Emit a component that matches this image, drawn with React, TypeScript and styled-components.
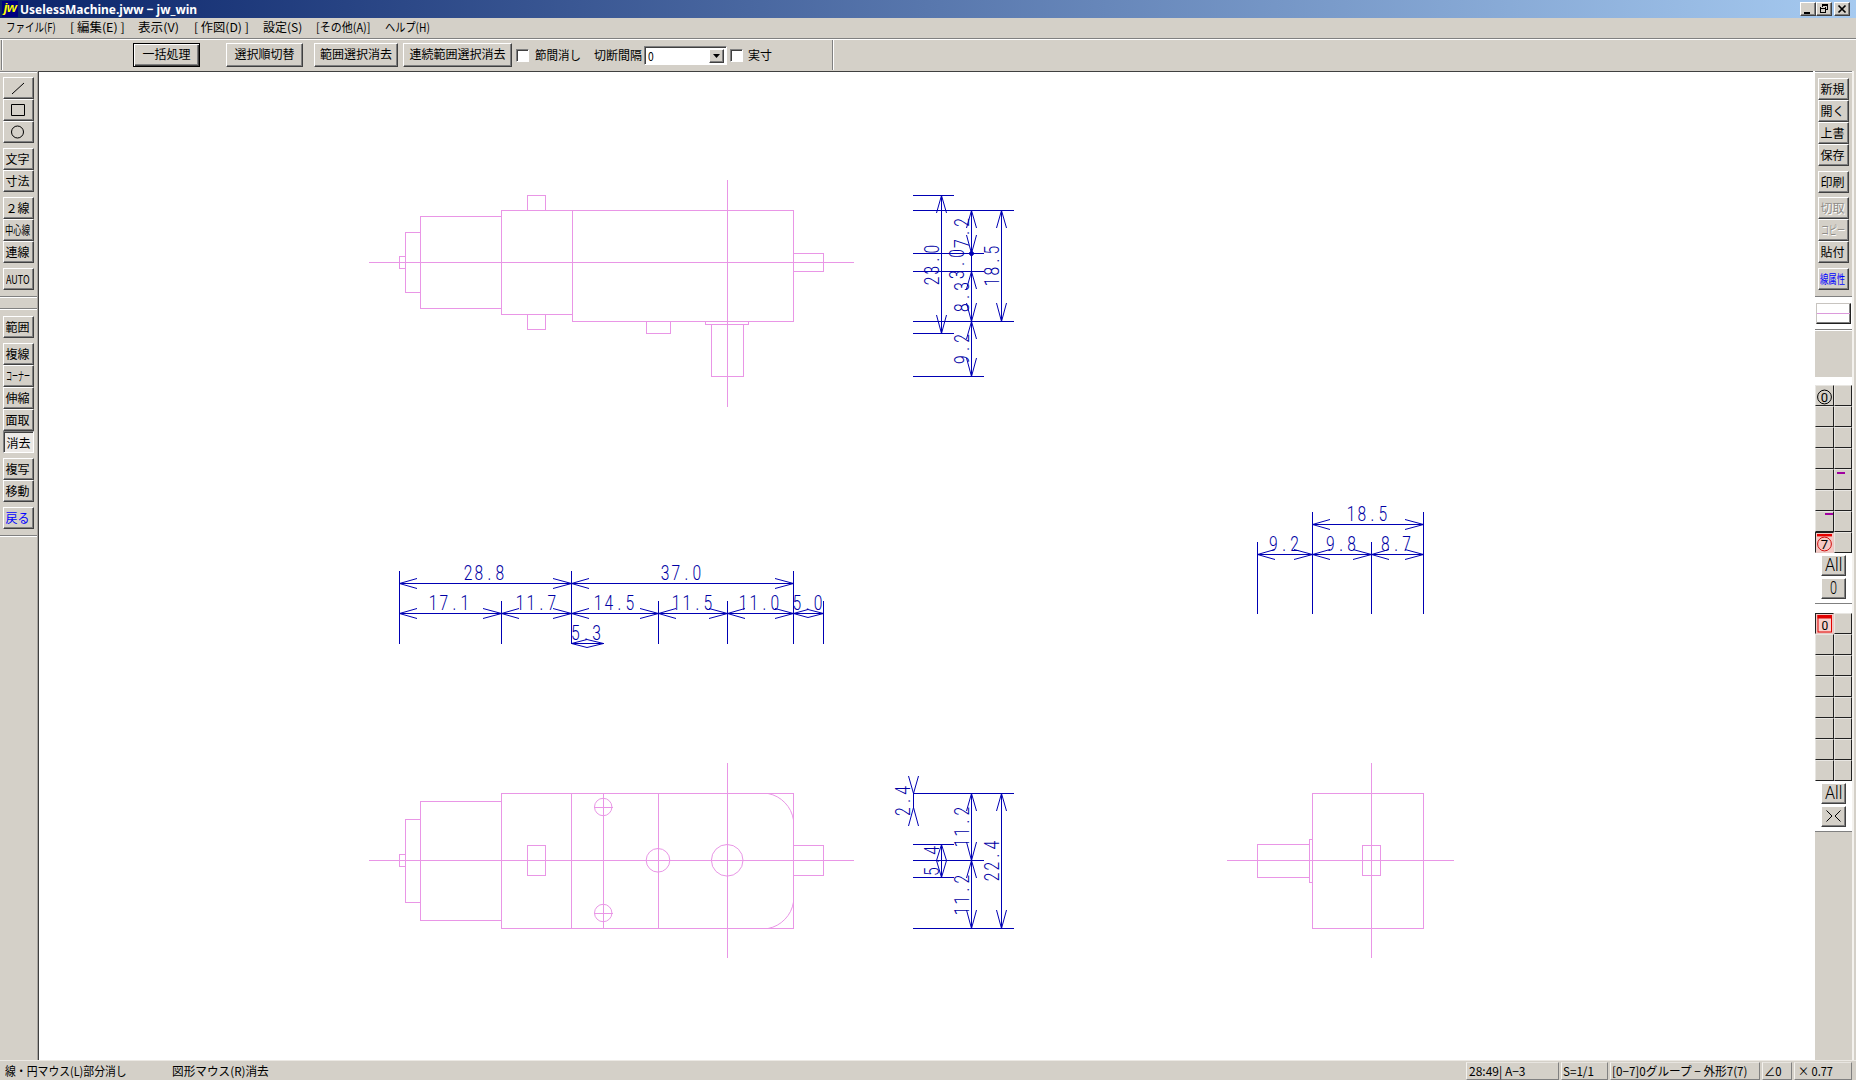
import React, { useLayoutEffect, useRef, useState } from "react";
import styled, { createGlobalStyle, css } from "styled-components";

const FACE = "#d4d0c8";
const DARK = "#808080";
const INK = "#0000b4";
const PINK = "#e996e6";
const UI_FONT = '"Noto Sans CJK JP", "Liberation Sans", sans-serif';

const GlobalStyle = createGlobalStyle`
  * { box-sizing: border-box; }
  body { margin: 0; background: ${FACE}; overflow: hidden; }
`;

const raised = css`
  border: 1px solid;
  border-color: #fff #404040 #404040 #fff;
  box-shadow: inset -1px -1px 0 ${DARK};
`;

const sunken = css`
  border: 1px solid;
  border-color: ${DARK} #fff #fff ${DARK};
  box-shadow: inset 1px 1px 0 #404040;
`;

const Window = styled.div`
  width: 1856px;
  height: 1080px;
  display: flex;
  flex-direction: column;
  background: ${FACE};
  color: #000;
  font: 12px/14px ${UI_FONT};
  overflow: hidden;
`;

/* ---------- text squeezed to the narrow UI face ---------- */

const FitBox = styled.span<{ $w: number; $gap: number }>`
  display: block;
  flex: none;
  width: ${(p) => p.$w}px;
  margin-left: ${(p) => p.$gap}px;
  white-space: pre;
`;

const FitInner = styled.span`
  display: inline-block;
  transform-origin: 0 50%;
`;

function Fit({ w, gap = 0, children }: { w: number; gap?: number; children: React.ReactNode }) {
  const ref = useRef<HTMLSpanElement>(null);
  const [scale, setScale] = useState(1);
  useLayoutEffect(() => {
    if (ref.current) setScale(w / ref.current.offsetWidth);
  }, [w]);
  return (
    <FitBox $w={w} $gap={gap}>
      <FitInner ref={ref} style={{ transform: `scaleX(${scale})` }}>
        {children}
      </FitInner>
    </FitBox>
  );
}

/* ---------- title bar ---------- */

const TitleBar = styled.header`
  flex: none;
  height: 18px;
  display: flex;
  align-items: center;
  background: linear-gradient(90deg, #0a246a, #a6caf0);
  color: #fff;
  font: bold 13px/18px "Noto Sans", "Liberation Sans", sans-serif;
`;

const AppIcon = styled.span`
  width: 16px;
  height: 16px;
  margin-left: 2px;
  background: #000080;
  color: #ffff00;
  font: italic bold 13px/14px "Liberation Sans", sans-serif;
  text-align: center;
  letter-spacing: -0.5px;
`;

const WindowButtons = styled.div`
  display: flex;
  margin-left: auto;
  padding-right: 6px;
`;

const WindowButton = styled.button<{ $gap?: number }>`
  width: 16px;
  height: 14px;
  margin-left: ${(p) => p.$gap ?? 0}px;
  padding: 0;
  background: ${FACE};
  display: flex;
  ${raised}
`;

/* ---------- menu ---------- */

const MenuBar = styled.nav`
  flex: none;
  height: 20px;
  display: flex;
  align-items: center;
  padding-bottom: 2px;
  line-height: 18px;
`;

/* ---------- toolbar ---------- */

const ToolBar = styled.div`
  flex: none;
  height: 33px;
  display: flex;
  align-items: center;
  border-top: 1px solid ${DARK};
  box-shadow: inset 0 1px 0 #fff;
`;

const Groove = styled.i<{ $gap: number }>`
  flex: none;
  width: 2px;
  height: 30px;
  margin-left: ${(p) => p.$gap}px;
  border-left: 1px solid ${DARK};
  border-right: 1px solid #fff;
`;

const PushButton = styled.button<{ $w: number; $gap: number; $default?: boolean }>`
  flex: none;
  width: ${(p) => p.$w}px;
  height: 24px;
  margin-left: ${(p) => p.$gap}px;
  padding: 0 0 3px;
  display: flex;
  align-items: center;
  justify-content: center;
  background: ${FACE};
  color: #000;
  font: 12px/18px ${UI_FONT};
  ${raised}
  ${(p) =>
    p.$default &&
    css`
      border-color: #000;
      box-shadow: inset 1px 1px 0 #fff, inset -1px -1px 0 #404040, inset -2px -2px 0 ${DARK};
    `}
`;

const CheckBox = styled.span<{ $gap: number }>`
  flex: none;
  width: 13px;
  height: 13px;
  margin-left: ${(p) => p.$gap}px;
  background: #fff;
  ${sunken}
`;

const Combo = styled.div`
  flex: none;
  width: 83px;
  height: 19px;
  margin-left: 2px;
  padding: 2px;
  display: flex;
  justify-content: space-between;
  line-height: 13px;
  background: #fff;
  ${sunken}
`;

const ComboButton = styled.span`
  width: 15px;
  height: 14px;
  background: ${FACE};
  display: flex;
  align-items: center;
  justify-content: center;
  ${raised}
`;

/* ---------- work area ---------- */

const Work = styled.main`
  flex: 1;
  min-height: 0;
  display: flex;
`;

const SideBar = styled.aside`
  flex: none;
  width: 37px;
  display: flex;
  flex-direction: column;
  align-items: flex-start;
  border-top: 1px solid ${DARK};
  box-shadow: inset 0 1px 0 #fff;
  padding-top: 6px;
`;

const LeftFrame = styled.div`
  flex: none;
  width: 39px;
  display: flex;
  border-right: 1px solid #404040;
`;

const Rail = styled.i`
  flex: none;
  width: 1px;
  background: #a8a4a0;
`;

const RightFrame = styled.div`
  flex: none;
  width: 43px;
  display: flex;
  padding-left: 2px;
  background: linear-gradient(90deg, #fff 2px, ${FACE} 2px);
`;

const EdgeLine = styled.i`
  flex: none;
  width: 2px;
  background: #f4f2ee;
`;

const ToolGroup = styled.div<{ $gap?: number }>`
  flex: none;
  display: flex;
  flex-direction: column;
  margin-top: ${(p) => p.$gap ?? 5}px;
  margin-left: 3px;
`;

const Tool = styled.button<{ $tone?: "blue" | "off"; $down?: boolean }>`
  width: 31px;
  height: 22px;
  padding: 0 2px 0 0;
  display: flex;
  align-items: center;
  justify-content: center;
  background: ${FACE};
  color: ${(p) => (p.$tone === "blue" ? "#0000ff" : p.$tone === "off" ? "#908d88" : "#000")};
  text-shadow: ${(p) => (p.$tone === "off" ? "1px 1px 0 #fff" : "none")};
  font: 12px/18px ${UI_FONT};
  ${raised}
  ${(p) =>
    p.$down &&
    css`
      background: #ece9e6;
      padding: 1px 0 0;
      ${sunken}
    `}
`;

const Rule = styled.i<{ $gap: number }>`
  flex: none;
  width: 100%;
  height: 2px;
  margin-top: ${(p) => p.$gap}px;
  border-top: 1px solid ${DARK};
  border-bottom: 1px solid #fff;
`;

const Canvas = styled.section`
  flex: 1;
  min-width: 0;
  background: #fff;
  border-top: 1px solid #404040;
`;

const Drawing = styled.svg`
  display: block;
  width: 1774px;
  height: 988px;
`;

/* ---------- layer panel ---------- */

const PenBand = styled.div`
  flex: none;
  width: 100%;
  height: 32px;
  padding: 5px 1px 0;
  background: #fff;
`;

const PenPreview = styled.div`
  height: 21px;
  display: flex;
  align-items: center;
  background: #fff;
  border: 1px solid;
  border-color: #c8c4c0 #202020 #202020 #c8c4c0;
  box-shadow: inset -1px -1px 0 #808080;
  i { flex: 1; height: 1px; background: #dc9adc; }
`;

const LayerPanel = styled.div<{ $top: number; $pad: number; $h: number }>`
  flex: none;
  width: 100%;
  height: ${(p) => p.$h}px;
  margin-top: ${(p) => p.$top}px;
  padding-top: ${(p) => p.$pad}px;
  display: flex;
  flex-direction: column;
  align-items: center;
  background: #fff;
  border-bottom: 1px solid ${DARK};
`;

const LayerGrid = styled.div`
  width: 37px;
  height: 168px;
  display: grid;
  grid-template: repeat(8, 21px) / 19px 18px;
  margin-bottom: 2px;
`;

const Cell = styled.div<{ $down?: boolean }>`
  background: ${FACE};
  border: 1px solid;
  border-color: #e8e6e2 #202020 #202020 #e8e6e2;
  display: flex;
  align-items: center;
  justify-content: center;
  overflow: hidden;
  ${(p) =>
    p.$down &&
    css`
      border-color: #202020 #e8c8c4 #e8c8c4 #202020;
      background: #f4c8c4;
    `}
`;

const Dash = styled.i<{ $x: number; $y: number }>`
  align-self: flex-start;
  width: 8px;
  height: 2px;
  margin: ${(p) => p.$y}px auto 0 ${(p) => p.$x}px;
  background: #a000a0;
`;

const LayerButton = styled.button`
  flex: none;
  width: 25px;
  height: 21px;
  margin-bottom: 2px;
  padding: 0 1px 1px 0;
  display: flex;
  align-items: center;
  justify-content: center;
  background: ${FACE};
  color: #000;
  font: 300 18px/18px Roboto, "Liberation Sans", sans-serif;
  ${raised}
`;

/* ---------- status bar ---------- */

const StatusBar = styled.footer`
  flex: none;
  height: 20px;
  display: flex;
  align-items: center;
  padding: 1px 4px 0 0;
  border-top: 1px solid #ece9e4;
`;

const StatusCell = styled.div<{ $w: number }>`
  flex: none;
  width: ${(p) => p.$w}px;
  height: 18px;
  margin-left: 2px;
  padding-bottom: 1px;
  display: flex;
  align-items: center;
  border: 1px solid;
  border-color: #e8e5e0 ${DARK} ${DARK} #f4f2ee;
`;

const StatusMessage = styled.div`
  display: flex;
  flex: 1;
  padding-bottom: 1px;
`;

/* ---------- drawing primitives ---------- */

const Outline = styled.g`
  fill: none;
  stroke: ${PINK};
  stroke-width: 1;
`;

const Dims = styled.g`
  fill: none;
  stroke: ${INK};
  stroke-width: 1;
`;

const DimText = styled.text`
  fill: #0000a4;
  stroke: none;
  text-anchor: middle;
  font: 300 19.5px Roboto, "Liberation Sans", sans-serif;
`;

const Box = ({ x1, y1, x2, y2 }: { x1: number; y1: number; x2: number; y2: number }) => (
  <rect x={x1 + 0.5} y={y1 + 0.5} width={x2 - x1} height={y2 - y1} shapeRendering="crispEdges" />
);

const HLine = ({ x1, x2, y }: { x1: number; x2: number; y: number }) => (
  <line x1={x1} x2={x2 + 1} y1={y + 0.5} y2={y + 0.5} shapeRendering="crispEdges" />
);

const VLine = ({ x, y1, y2 }: { x: number; y1: number; y2: number }) => (
  <line x1={x + 0.5} x2={x + 0.5} y1={y1} y2={y2 + 1} shapeRendering="crispEdges" />
);

const STEP = 10.6;
const SQUEEZE = 0.8;

function Label({ x, y, text, up }: { x: number; y: number; text: string; up?: boolean }) {
  const xs = [...text].map((_, i) => ((i - (text.length - 1) / 2) * STEP) / SQUEEZE).join(" ");
  return (
    <DimText x={xs} y={0} transform={`translate(${x} ${y}) ${up ? "rotate(-90)" : ""} scale(${SQUEEZE} 1)`}>
      {text}
    </DimText>
  );
}

function HDim({ a, b, y, text, c }: { a: number; b: number; y: number; text: string; c: number }) {
  const l = Math.min(18, (b - a) / 2);
  const m = y + 0.5;
  const s = l < 18 ? 4 : 5;
  return (
    <>
      <HLine x1={a} x2={b} y={y} />
      <path d={`M${a + l} ${m - s}L${a + 0.5} ${m}L${a + l} ${m + s}M${b - l} ${m - s}L${b + 0.5} ${m}L${b - l} ${m + s}`} />
      <Label x={c} y={y - 3.5} text={text} />
    </>
  );
}

function VDim({ a, b, x, text, c, off = 2.5, bare }: { a: number; b: number; x: number; text: string; c: number; off?: number; bare?: boolean }) {
  const l = Math.min(18, (b - a) / 2);
  const m = x + 0.5;
  return (
    <>
      <VLine x={x} y1={a} y2={b} />
      {!bare && (
        <path d={`M${m - 5} ${a + l}L${m} ${a + 0.5}L${m + 5} ${a + l}M${m - 5} ${b - l}L${m} ${b + 0.5}L${m + 5} ${b - l}`} />
      )}
      <Label x={x - off} y={c} text={text} up />
    </>
  );
}

const SideView = () => (
  <Outline>
    <HLine x1={369} x2={853} y={262} />
    <VLine x={727} y1={180} y2={406} />
    <Box x1={399} y1={256} x2={405} y2={268} />
    <Box x1={405} y1={232} x2={420} y2={292} />
    <Box x1={420} y1={216} x2={501} y2={308} />
    <Box x1={501} y1={210} x2={572} y2={314} />
    <Box x1={572} y1={210} x2={793} y2={321} />
    <Box x1={527} y1={195} x2={545} y2={210} />
    <Box x1={527} y1={314} x2={545} y2={329} />
    <Box x1={793} y1={253} x2={823} y2={271} />
    <Box x1={646} y1={321} x2={670} y2={333} />
    <Box x1={705} y1={321} x2={748} y2={324} />
    <Box x1={711} y1={324} x2={743} y2={376} />
  </Outline>
);

const TopView = () => (
  <Outline>
    <HLine x1={369} x2={853} y={860} />
    <VLine x={727} y1={763} y2={957} />
    <Box x1={399} y1={854} x2={405} y2={866} />
    <Box x1={405} y1={819} x2={420} y2={902} />
    <Box x1={420} y1={801} x2={501} y2={920} />
    <Box x1={501} y1={793} x2={793} y2={928} />
    <VLine x={571} y1={793} y2={928} />
    <VLine x={603} y1={793} y2={928} />
    <VLine x={658} y1={793} y2={928} />
    <Box x1={527} y1={845} x2={545} y2={875} />
    <Box x1={793} y1={845} x2={823} y2={875} />
    <circle cx={603.2} cy={807} r={8.7} />
    <circle cx={603.2} cy={913} r={8.7} />
    <HLine x1={594} x2={612} y={807} />
    <HLine x1={594} x2={612} y={913} />
    <circle cx={658} cy={860.3} r={11.8} />
    <circle cx={727.2} cy={860.3} r={15.8} />
    <path d="M768 793.5A32 32 0 0 1 793.5 820M768 928.5A32 32 0 0 0 793.5 902" />
  </Outline>
);

const EndView = () => (
  <Outline>
    <HLine x1={1227} x2={1453} y={860} />
    <VLine x={1371} y1={763} y2={957} />
    <Box x1={1312} y1={793} x2={1423} y2={928} />
    <Box x1={1362} y1={845} x2={1380} y2={875} />
    <Box x1={1309} y1={839} x2={1312} y2={882} />
    <Box x1={1257} y1={844} x2={1309} y2={877} />
  </Outline>
);

const Dimensions = () => (
  <Dims>
    {[[195, 953], [210, 1013], [253, 983], [271, 983], [321, 1013], [333, 953], [376, 983],
      [793, 1013], [844, 953], [860, 983], [877, 953], [928, 1013]].map(([y, x2]) => (
      <HLine key={y} x1={913} x2={x2} y={y} />
    ))}
    <VDim x={941} a={195} b={333} text="23.0" c={265} />
    <VDim x={971} a={210} b={253} text="7.2" c={233} />
    <VDim x={971} a={253} b={271} text="3.0" c={264} off={7} bare />
    <VDim x={971} a={271} b={321} text="8.3" c={297} />
    <VDim x={971} a={321} b={376} text="9.2" c={349} />
    <VDim x={1001} a={210} b={321} text="18.5" c={266} />
    <circle cx={971.5} cy={253.5} r={2} fill={INK} />

    <VLine x={913} y1={793} y2={807} />
    <path d="M908.500 776L913.500 793.500L918.500 776M908.500 826L913.500 807.500L918.500 826" />
    <Label x={909.5} y={801} text="2.4" up />
    <VDim x={971} a={793} b={860} text="11.2" c={827} />
    <VDim x={971} a={860} b={928} text="11.2" c={895} />
    <VDim x={1001} a={793} b={928} text="22.4" c={861} />
    <VDim x={941} a={844} b={877} text="5.4" c={861} />

    {[[399, 571], [501, 601], [571, 571], [658, 601], [727, 601], [793, 571], [823, 601]].map(([x, y]) => (
      <VLine key={x} x={x} y1={y} y2={643} />
    ))}
    <HDim a={399} b={571} y={583} text="28.8" c={484} />
    <HDim a={571} b={793} y={583} text="37.0" c={681} />
    <HDim a={399} b={501} y={613} text="17.1" c={449} />
    <HDim a={501} b={571} y={613} text="11.7" c={536} />
    <HDim a={571} b={658} y={613} text="14.5" c={614} />
    <HDim a={658} b={727} y={613} text="11.5" c={692} />
    <HDim a={727} b={793} y={613} text="11.0" c={759} />
    <HDim a={793} b={823} y={613} text="5.0" c={807.5} />
    <HDim a={571} b={603} y={643} text="5.3" c={586} />

    {[[1257, 542], [1312, 512], [1371, 542], [1423, 512]].map(([x, y]) => (
      <VLine key={x} x={x} y1={y} y2={613} />
    ))}
    <HDim a={1312} b={1423} y={524} text="18.5" c={1367} />
    <HDim a={1257} b={1312} y={554} text="9.2" c={1284} />
    <HDim a={1312} b={1371} y={554} text="9.8" c={1341} />
    <HDim a={1371} b={1423} y={554} text="8.7" c={1396} />
  </Dims>
);

const Cells = ({ marks }: { marks: Record<number, React.ReactNode> }) => (
  <LayerGrid>
    {Array.from({ length: 16 }, (_, i) => (
      <React.Fragment key={i}>{marks[i] ?? <Cell />}</React.Fragment>
    ))}
  </LayerGrid>
);

const Ring = ({ n, active }: { n: string; active?: boolean }) => (
  <svg width="17" height="19" viewBox="0 0 17 19">
    {active && <rect x="1" y="1" width="15" height="2.400" fill="#e80000" />}
    <circle cx="8.500" cy="11" r="6.900" fill="none" stroke={active ? "#d01010" : "#000"} />
    <text x="8.500" y="15.600" textAnchor="middle" fontFamily="Roboto, sans-serif" fontSize="13" fill="#000">
      {n}
    </text>
  </svg>
);

export default function App() {
  return (
    <Window>
      <GlobalStyle />
      <TitleBar>
        <AppIcon>jw</AppIcon>
        <Fit gap={2} w={177}>UselessMachine.jww − jw_win</Fit>
        <WindowButtons>
          <WindowButton>
            <svg width="14" height="12" shapeRendering="crispEdges"><path d="M3 9h6v2H3z" /></svg>
          </WindowButton>
          <WindowButton>
            <svg width="14" height="12" fill="none" stroke="#000" shapeRendering="crispEdges">
              <path d="M5 2h6M5 1.500h6M5.500 1v3M10.500 1v6M9 6.500h2M3 5h6M3.500 4v6M3 9.500h6M8.500 4v6" />
            </svg>
          </WindowButton>
          <WindowButton $gap={2}>
            <svg width="14" height="12"><path d="M3.500 2.500l7 7M10.500 2.500l-7 7" stroke="#000" strokeWidth="1.7" /></svg>
          </WindowButton>
        </WindowButtons>
      </TitleBar>

      <MenuBar>
        <Fit gap={6} w={50}>ファイル(F)</Fit>
        <Fit gap={14} w={55}>[ 編集(E) ]</Fit>
        <Fit gap={13} w={41}>表示(V)</Fit>
        <Fit gap={15} w={55}>[ 作図(D) ]</Fit>
        <Fit gap={14} w={39}>設定(S)</Fit>
        <Fit gap={14} w={55}>[その他(A)]</Fit>
        <Fit gap={14} w={45}>ヘルプ(H)</Fit>
      </MenuBar>

      <ToolBar>
        <Groove $gap={1} />
        <PushButton $w={67} $gap={130} $default><Fit w={48}>一括処理</Fit></PushButton>
        <PushButton $w={77} $gap={26}><Fit w={60}>選択順切替</Fit></PushButton>
        <PushButton $w={84} $gap={11}><Fit w={72}>範囲選択消去</Fit></PushButton>
        <PushButton $w={109} $gap={5}><Fit w={96}>連続範囲選択消去</Fit></PushButton>
        <CheckBox $gap={4} />
        <Fit gap={6} w={46}>節間消し</Fit>
        <Fit gap={13} w={48}>切断間隔</Fit>
        <Combo>
          <Fit gap={1} w={6}>0</Fit>
          <ComboButton>
            <svg width="7" height="4"><path d="M0 0h7L3.500 4z" /></svg>
          </ComboButton>
        </Combo>
        <CheckBox $gap={3} />
        <Fit gap={5} w={24}>実寸</Fit>
        <Groove $gap={60} />
      </ToolBar>

      <Work>
        <LeftFrame>
          <SideBar>
            <ToolGroup $gap={-1}>
              <Tool><svg width="20" height="16" stroke="#000"><path d="M4 14L16 3" /></svg></Tool>
              <Tool><svg width="20" height="16" fill="none" stroke="#000"><path d="M3.500 2.500h13v11h-13z" /></svg></Tool>
              <Tool><svg width="20" height="16" fill="none" stroke="#000"><circle cx="9.500" cy="8" r="6" /></svg></Tool>
            </ToolGroup>
            <ToolGroup>
              <Tool><Fit w={24}>文字</Fit></Tool>
              <Tool><Fit w={24}>寸法</Fit></Tool>
            </ToolGroup>
            <ToolGroup>
              <Tool><Fit w={24}>２線</Fit></Tool>
              <Tool><Fit w={25}>中心線</Fit></Tool>
              <Tool><Fit w={24}>連線</Fit></Tool>
            </ToolGroup>
            <ToolGroup>
              <Tool><Fit w={24}>AUTO</Fit></Tool>
            </ToolGroup>
            <Rule $gap={6} />
            <Rule $gap={10} />
            <ToolGroup $gap={6}>
              <Tool><Fit w={24}>範囲</Fit></Tool>
            </ToolGroup>
            <ToolGroup>
              <Tool><Fit w={24}>複線</Fit></Tool>
              <Tool><Fit w={24}>コーナー</Fit></Tool>
              <Tool><Fit w={24}>伸縮</Fit></Tool>
              <Tool><Fit w={24}>面取</Fit></Tool>
              <Tool $down><Fit w={24}>消去</Fit></Tool>
            </ToolGroup>
            <ToolGroup>
              <Tool><Fit w={24}>複写</Fit></Tool>
              <Tool><Fit w={24}>移動</Fit></Tool>
            </ToolGroup>
            <ToolGroup>
              <Tool $tone="blue"><Fit w={24}>戻る</Fit></Tool>
            </ToolGroup>
            <Rule $gap={6} />
          </SideBar>
          <Rail />
        </LeftFrame>

        <Canvas>
          <Drawing viewBox="39 72 1774 988">
            <SideView />
            <TopView />
            <EndView />
            <Dimensions />
          </Drawing>
        </Canvas>

        <RightFrame>
          <SideBar>
            <ToolGroup $gap={0}>
              <Tool><Fit w={24}>新規</Fit></Tool>
              <Tool><Fit w={24}>開く</Fit></Tool>
              <Tool><Fit w={24}>上書</Fit></Tool>
              <Tool><Fit w={24}>保存</Fit></Tool>
            </ToolGroup>
            <ToolGroup>
              <Tool><Fit w={24}>印刷</Fit></Tool>
            </ToolGroup>
            <ToolGroup $gap={4}>
              <Tool $tone="off"><Fit w={24}>切取</Fit></Tool>
              <Tool $tone="off"><Fit w={24}>コピー</Fit></Tool>
              <Tool><Fit w={24}>貼付</Fit></Tool>
            </ToolGroup>
            <ToolGroup>
              <Tool $tone="blue"><Fit w={25}>線属性</Fit></Tool>
            </ToolGroup>
            <Rule $gap={6} />
            <PenBand>
              <PenPreview><i /></PenPreview>
            </PenBand>
            <Rule $gap={-1} />

            <LayerPanel $top={46} $pad={8} $h={227}>
              <Cells
                marks={{
                  0: <Cell><Ring n="0" /></Cell>,
                  9: <Cell><Dash $x={2} $y={2} /></Cell>,
                  12: <Cell><Dash $x={9} $y={1} /></Cell>,
                  14: <Cell $down><Ring n="7" active /></Cell>,
                }}
              />
              <LayerButton><Fit w={17}>All</Fit></LayerButton>
              <LayerButton><Fit w={7}>0</Fit></LayerButton>
            </LayerPanel>

            <LayerPanel $top={0} $pad={9} $h={228}>
              <Cells
                marks={{
                  0: (
                    <Cell $down>
                      <svg width="17" height="19" viewBox="0 0 17 19">
                        <rect x="2" y="1.500" width="13.500" height="16.500" fill="#f8d0cc" stroke="#e00000" />
                        <path d="M1.500 1h14.500v3.500H1.500z" fill="#e00000" />
                        <text x="8.800" y="15.800" textAnchor="middle" fontFamily="Roboto, sans-serif" fontSize="12" fill="#000">0</text>
                      </svg>
                    </Cell>
                  ),
                }}
              />
              <LayerButton><Fit w={17}>All</Fit></LayerButton>
              <LayerButton>
                <svg width="17" height="14" fill="none" stroke="#000"><path d="M1.500 1.500L7 7l-5.500 5.500M15.500 1.500L10 7l5.500 5.500" /></svg>
              </LayerButton>
            </LayerPanel>
          </SideBar>
          <EdgeLine />
        </RightFrame>
      </Work>

      <StatusBar>
        <StatusMessage>
          <Fit gap={5} w={122}>線・円マウス(L)部分消し</Fit>
          <Fit gap={45} w={97}>図形マウス(R)消去</Fit>
        </StatusMessage>
        <StatusCell $w={93}><Fit gap={2} w={57}>28:49| A−3</Fit></StatusCell>
        <StatusCell $w={47}><Fit gap={1} w={31}>S=1/1</Fit></StatusCell>
        <StatusCell $w={150}><Fit gap={1} w={136}>[0−7]0グループ − 外形7(7)</Fit></StatusCell>
        <StatusCell $w={30}><Fit gap={1} w={18}>∠0</Fit></StatusCell>
        <StatusCell $w={58}><Fit gap={3} w={35}>× 0.77</Fit></StatusCell>
      </StatusBar>
    </Window>
  );
}
